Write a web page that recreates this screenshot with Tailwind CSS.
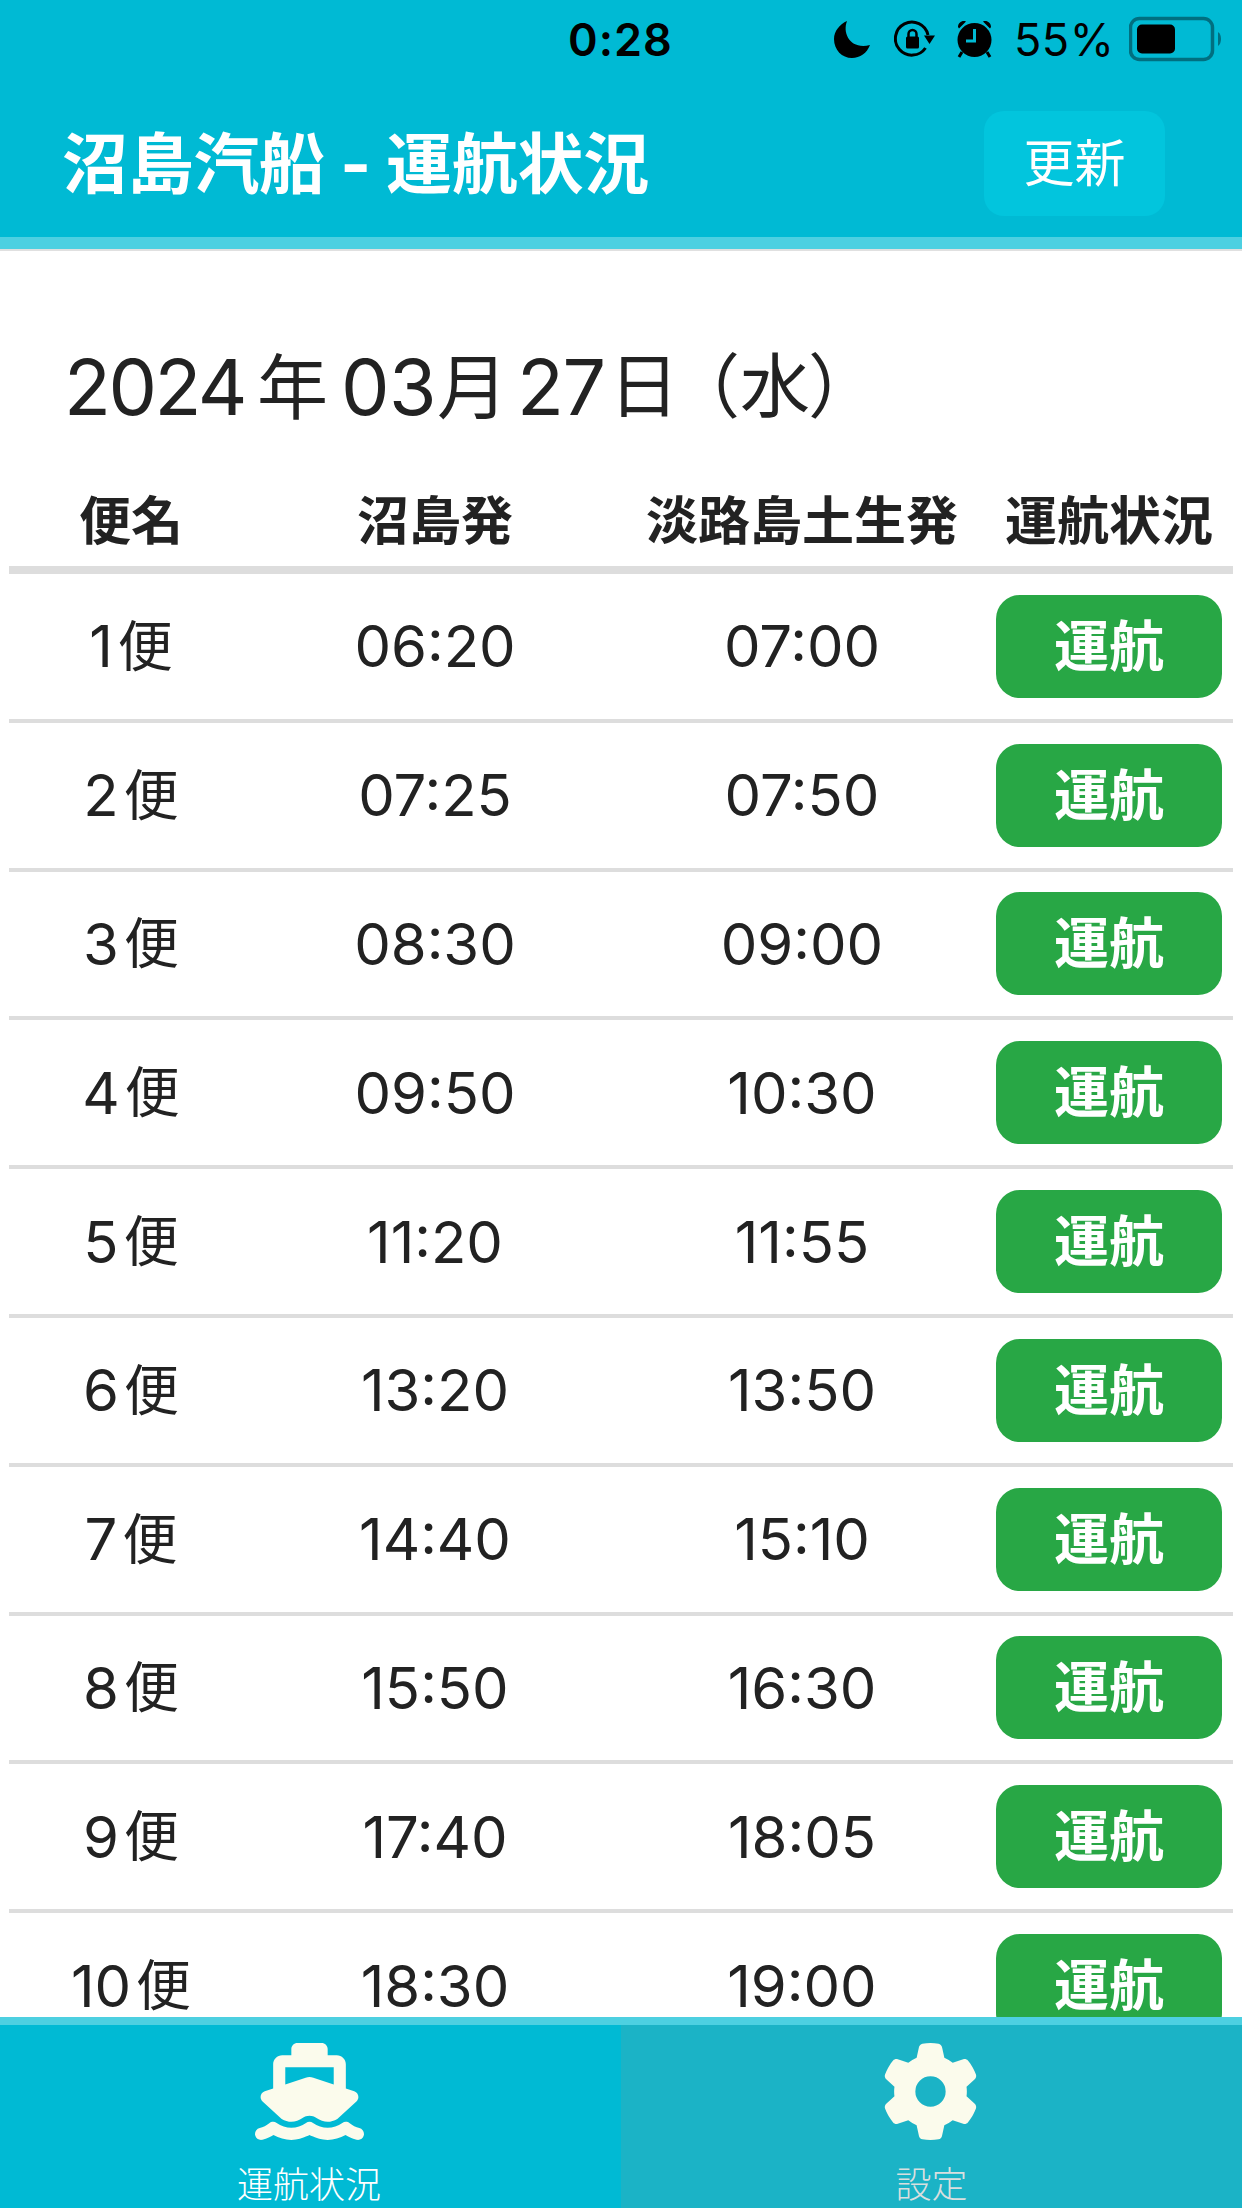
<!DOCTYPE html>
<html lang="ja">
<head>
  <meta charset="UTF-8" />
  <meta name="viewport" content="width=device-width, initial-scale=1.0" />
  <title>沼島汽船 - 運航状況</title>
  <script src="https://cdn.jsdelivr.net/npm/@tailwindcss/browser@4"></script>
</head>
<body class="h-[2208px] flex flex-col overflow-hidden bg-white text-[#222] font-['Inter','Noto_Sans_CJK_JP',sans-serif]">

  <header class="h-[237px] shrink-0 bg-[#00bad4]">
    <!-- Status bar -->
    <div class="h-[78px] flex items-center text-black pl-[568px]">
      <span class="w-[266px] text-[45px] leading-none font-semibold tracking-[1px]">0:28</span>
      <svg class="w-[36px] h-[37px] mr-6" viewBox="0 0 36 37"><path d="M13 0C8 13 17 29 36 24C33 32 26 37 18 37C8 37 0 29 0 18C0 10 6 3 13 0Z"/></svg>
      <svg class="w-[42px] h-[38px] mr-[21px]" viewBox="0 0 42 38" fill="none" stroke="#000" stroke-width="3"><path d="M31.500 28A16.500 16.500 0 1 1 34 15"/><path d="M30 15.500H41L35.500 24Z" fill="#000" stroke="none"/><rect x="12" y="16.500" width="13" height="12" rx="1.500" fill="#000" stroke="none"/><path d="M14.500 18V14a4 4 0 0 1 8 0v4" stroke-width="2.500"/></svg>
      <svg class="w-[35px] h-[38px] mr-[22px]" viewBox="0 0 35 38"><circle cx="17.500" cy="20" r="17"/><path d="M1 7C1 3 5 0 9 1.500L2 8.500ZM34 7C34 3 30 0 26 1.500L33 8.500Z"/><path d="M5 32L2 37M30 32L33 37" stroke="#000" stroke-width="3"/><path d="M17.500 9V21H9" fill="none" stroke="#00bad4" stroke-width="3"/></svg>
      <span class="w-[115px] text-[45px] leading-none tracking-[0.5px]">55%</span>
      <svg class="w-[94px] h-[46px]" viewBox="0 0 94 46"><rect x="1.500" y="2.500" width="82" height="41" rx="9" fill="none" stroke="#006f80" stroke-width="3.500"/><rect x="8" y="8.500" width="38" height="29" rx="5"/><path d="M89 16Q92 18 92 23T89 30Z" fill="#006f80"/></svg>
    </div>
    <!-- Title -->
    <div class="h-[170px] flex items-center justify-between pl-[62px] pr-[77px] text-white">
      <h1 class="pt-[2px] text-[66px] leading-none font-bold tracking-[-0.3px]">沼島汽船 - 運航状況</h1>
      <button class="w-[181px] h-[105px] rounded-[20px] bg-[#02c5dd] text-[51px] leading-none">更新</button>
    </div>
  </header>
  <div class="h-[14px] shrink-0 bg-[#4dd0e1] border-b-2 border-[#e0e0e0]"></div>

  <main class="flex-1 min-h-0 overflow-hidden">
    <!-- Date -->
    <div class="h-[220px] pt-[52px] pl-[64px] flex items-center text-[77px] leading-none whitespace-nowrap">
      <span class="w-[193px] tracking-[-2.5px]">2024</span>
      <span class="w-[84px] text-[71px]">年</span>
      <span class="w-[96px] tracking-[-0.5px]">03</span>
      <span class="w-[80px] text-[71px]">月</span>
      <span class="w-[92px] tracking-[-1.500px]">27</span>
      <span class="text-[70px]">日<span class="-ml-[9px]">（</span>水<span class="-ml-[2px]">）</span></span>
    </div>

    <!-- Timetable -->
    <div class="mx-[9px]">
      <div class="h-[103px] pt-[7px] border-b-8 border-[#ddd] grid grid-cols-[244px_364px_370px_244px] items-center text-center text-[52px] leading-none font-bold">
        <span>便名</span>
        <span>沼島発</span>
        <span>淡路島土生発</span>
        <span>運航状況</span>
      </div>
      <div id="rows"></div>
    </div>
  </main>

  <!-- Tabs -->
  <nav class="h-[191px] shrink-0 border-t-8 border-[#4dd0e1] grid grid-cols-2 text-[36px] leading-none font-light">
    <a class="bg-[#00bad4] flex flex-col items-center pt-[18px] pr-[3px] text-white">
      <svg class="w-[109px] h-[97px] mb-[27px]" viewBox="0 0 576 512" fill="#fbfbec"><path d="M192 32c0-17.700 14.300-32 32-32H352c17.700 0 32 14.300 32 32V64h48c26.500 0 48 21.500 48 48V240l44.400 14.800c23.100 7.700 29.500 37.500 11.500 53.900l-101 92.600c-16.200 9.400-34.700 15.100-50.900 15.100c-19.600 0-40.800-7.700-59.200-20.300c-22.100-15.500-51.600-15.500-73.700 0c-17.100 11.800-38 20.300-59.200 20.300c-16.200 0-34.700-5.700-50.900-15.100l-101-92.600c-18-16.500-11.600-46.200 11.500-53.900L96 240V112c0-26.500 21.500-48 48-48h48V32zM160 218.700l107.800-35.900c13.100-4.400 27.300-4.400 40.500 0L416 218.700V128H160v90.700zM306.500 421.900C329 437.400 356.500 448 384 448c26.900 0 55.400-10.800 77.400-26.100l0 0c11.900-8.500 28.100-7.800 39.200 1.700c14.400 11.900 32.500 21 50.600 25.200c17.200 4 27.900 21.200 23.900 38.400s-21.200 27.900-38.400 23.900c-24.500-5.700-44.900-16.500-58.200-25C449.500 501.700 417 512 384 512c-31.900 0-60.600-9.900-80.400-18.900c-5.800-2.700-11.100-5.300-15.600-7.700c-4.500 2.400-9.700 5.100-15.600 7.700c-19.800 9-48.500 18.900-80.400 18.900c-33 0-65.500-10.300-94.500-25.800c-13.400 8.400-33.700 19.300-58.200 25c-17.200 4-34.400-6.700-38.400-23.900s6.700-34.400 23.900-38.400c18.100-4.200 36.200-13.300 50.600-25.200c11.100-9.400 27.300-10.100 39.200-1.700l0 0C136.700 437.200 165.100 448 192 448c27.500 0 55-10.600 77.500-26.100c11.100-7.900 25.900-7.900 37 0z"/></svg>
      <span>運航状況</span>
    </a>
    <a class="bg-[#1bb3c6] flex flex-col items-center pt-[18px] pr-[2px] text-[#d9dfdf]">
      <svg class="w-[97px] h-[97px] mb-[27px]" viewBox="0 0 512 512" fill="#fbfbec"><path d="M495.900 166.600c3.200 8.700 .5 18.400-6.400 24.600l-43.300 39.400c1.100 8.300 1.700 16.800 1.700 25.400s-.6 17.100-1.700 25.400l43.300 39.400c6.900 6.200 9.600 15.900 6.400 24.600c-4.400 11.900-9.700 23.300-15.800 34.300l-4.700 8.100c-6.600 11-14 21.400-22.100 31.200c-5.900 7.200-15.700 9.600-24.500 6.800l-55.700-17.700c-13.400 10.300-28.200 18.900-44 25.400l-12.500 57.100c-2 9.100-9 16.300-18.200 17.800c-13.800 2.300-28 3.500-42.500 3.500s-28.700-1.200-42.500-3.500c-9.200-1.500-16.200-8.700-18.200-17.800l-12.500-57.100c-15.800-6.500-30.600-15.100-44-25.400L83.100 425.900c-8.800 2.800-18.600 .3-24.500-6.800c-8.100-9.800-15.500-20.200-22.100-31.200l-4.700-8.100c-6.100-11-11.400-22.400-15.800-34.300c-3.200-8.700-.5-18.400 6.400-24.600l43.300-39.400C64.600 273.100 64 264.600 64 256s.6-17.100 1.700-25.400L22.400 191.200c-6.900-6.200-9.600-15.900-6.400-24.600c4.400-11.900 9.700-23.300 15.800-34.300l4.700-8.100c6.600-11 14-21.400 22.100-31.200c5.900-7.200 15.700-9.600 24.500-6.800l55.700 17.700c13.400-10.300 28.200-18.900 44-25.400l12.500-57.100c2-9.100 9-16.300 18.200-17.800C227.300 1.200 241.500 0 256 0s28.700 1.200 42.500 3.500c9.200 1.500 16.200 8.700 18.200 17.800l12.500 57.100c15.800 6.500 30.600 15.100 44 25.400l55.700-17.700c8.800-2.800 18.600-.3 24.500 6.800c8.100 9.800 15.500 20.200 22.100 31.200l4.700 8.100c6.100 11 11.400 22.400 15.800 34.300zM256 336a80 80 0 1 0 0-160 80 80 0 1 0 0 160z"/></svg>
      <span class="pl-[2px]">設定</span>
    </a>
  </nav>

  <script>
    const times = [
      ['06:20', '07:00'], ['07:25', '07:50'], ['08:30', '09:00'], ['09:50', '10:30'], ['11:20', '11:55'],
      ['13:20', '13:50'], ['14:40', '15:10'], ['15:50', '16:30'], ['17:40', '18:05'], ['18:30', '19:00'],
    ];

    document.getElementById('rows').innerHTML = times.map(([numa, habu], i) => `
      <div class="h-[148.8px] border-b-4 border-[#ddd] grid grid-cols-[244px_364px_370px_244px] items-center justify-items-center text-[58px] leading-none">
        <span class="flex items-center gap-[5px]">${i + 1}<span class="text-[55px]">便</span></span>
        <span>${numa}</span>
        <span>${habu}</span>
        <span class="w-[226px] h-[103px] rounded-3xl bg-[#28a745] text-white text-[55px] font-bold flex items-center justify-center">運航</span>
      </div>`).join('');
  </script>

</body>
</html>
